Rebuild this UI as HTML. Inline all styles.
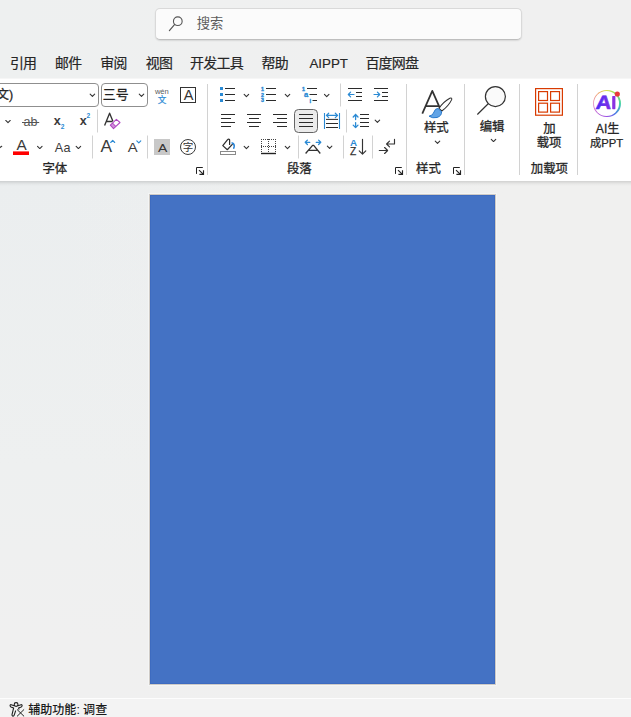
<!DOCTYPE html>
<html lang="zh-CN"><head><meta charset="utf-8"><title>Word</title>
<style>
html,body{margin:0;padding:0}
body{width:631px;height:717px;overflow:hidden;position:relative;background:linear-gradient(90deg,#eef0f0,#f0f0f0 70%);font-family:"Liberation Sans",sans-serif;}
div{position:absolute;box-sizing:border-box}
#search{left:155px;top:8px;width:367px;height:32px;background:#fbfbfb;border:1px solid #d9d9d9;border-bottom-color:#bebebe;border-radius:5px;box-shadow:0 1px 1.5px rgba(0,0,0,.10)}
#ribbon{left:0;top:78px;width:631px;height:103px;background:#fff;border-top:1px solid #f6f6f6}
#doc{left:0;top:181px;width:631px;height:517px;background:linear-gradient(90deg,rgba(240,240,239,0) 10%,rgba(240,240,239,1) 80%),linear-gradient(180deg,#ebeeef 0%,#eef0f0 55%,#f0f0f0 88%)}
#shadow{left:0;top:181px;width:631px;height:5px;background:linear-gradient(rgba(0,0,0,.13),rgba(0,0,0,.03) 60%,rgba(0,0,0,0))}
#page{left:150px;top:195px;width:345px;height:489px;background:#4472c4;border:1px solid #3d6bc0;box-shadow:0 0 0 1px #cfcbc6,0 0 0 2px #f4f5f5}
#status{left:0;top:698px;width:631px;height:19px;background:#f3f3f3;border-top:1px solid #fdfdfd}
.combo{top:83px;height:24px;border:1px solid #8f8f8f;border-radius:4px;background:#fff}
#justify{left:294px;top:109px;width:24px;height:24px;border:1px solid #656565;border-radius:4.5px;background:#ebebeb}
#airing{left:592.6px;top:89.8px;width:28px;height:27.4px;border-radius:50%;background:conic-gradient(from 0deg,#d4e44a 0deg,#8fe060 40deg,#48d6a8 90deg,#4a78e8 140deg,#9a4ee2 180deg,#b85ad6 225deg,#e89cc8 270deg,#f09a6c 315deg,#d4e44a 360deg)}
#airing i{position:absolute;left:1.35px;top:1.35px;right:1.35px;bottom:1.35px;border-radius:50%;background:#fff}
svg{position:absolute;left:0;top:0}
svg text{font-family:"Liberation Sans","Noto Sans CJK SC",sans-serif}
.sr{position:absolute;width:1px;height:1px;overflow:hidden;clip:rect(0 0 0 0);clip-path:inset(50%);white-space:nowrap;font-size:1px;color:transparent}
</style></head><body>
<div id="search"><span class="sr">搜索</span></div>
<div id="tabs" style="left:0;top:45px;width:631px;height:33px"><span class="sr">引用 邮件 审阅 视图 开发工具 帮助 AIPPT 百度网盘</span></div>
<div id="ribbon"><span class="sr">三号 字体 段落 样式 编辑 加载项 AI生成PPT</span></div>
<div id="doc"></div>
<div id="shadow"></div>
<div id="page"></div>
<div id="status"><span class="sr">辅助功能: 调查</span></div>
<div class="combo" style="left:-10px;width:109px"></div>
<div class="combo" style="left:101px;width:47px"></div>
<div id="justify"></div>
<div id="airing"><i></i></div>
<svg width="631" height="717" viewBox="0 0 631 717">
<circle cx="177.8" cy="21.2" r="4.35" fill="none" stroke="#555" stroke-width="1.1"/><path d="M174.7 24.4L169.4 30.6" stroke="#555" stroke-width="1.2" stroke-linecap="round"/>
<text x="196.68" y="28.26" font-size="13.33" fill="#5c5c5c">搜索</text>
<text x="9.97" y="68.29" font-size="13.92" fill="#262626" stroke="#262626" stroke-width="0.2" letter-spacing="-0.77">引用</text>
<text x="55.12" y="68.37" font-size="13.9" fill="#262626" stroke="#262626" stroke-width="0.2" letter-spacing="-0.76">邮件</text>
<text x="100.35" y="68.44" font-size="13.91" fill="#262626" stroke="#262626" stroke-width="0.2" letter-spacing="-0.77">审阅</text>
<text x="145.76" y="68.36" font-size="13.9" fill="#262626" stroke="#262626" stroke-width="0.2" letter-spacing="-0.76">视图</text>
<text x="190.07" y="68.42" font-size="14" fill="#262626" stroke="#262626" stroke-width="0.2" letter-spacing="-0.77">开发工具</text>
<text x="261.61" y="68.37" font-size="13.9" fill="#262626" stroke="#262626" stroke-width="0.2" letter-spacing="-0.76">帮助</text>
<text x="309.45" y="68.29" font-size="13.33" fill="#262626" stroke="#262626" stroke-width="0.16">AIPPT</text>
<text x="365.40" y="68.48" font-size="14" fill="#262626" stroke="#262626" stroke-width="0.2" letter-spacing="-0.77">百度网盘</text>
<text x="-3.48" y="98.97" font-size="12.5" fill="#262626" stroke="#262626" stroke-width="0.28">文)</text>
<path d="M90.15 94.17L92.40 96.42L94.65 94.17" fill="none" stroke="#333" stroke-width="1.1" stroke-linecap="round" stroke-linejoin="round"/>
<path d="M139.25 94.17L141.50 96.42L143.75 94.17" fill="none" stroke="#333" stroke-width="1.1" stroke-linecap="round" stroke-linejoin="round"/>
<text x="102.86" y="99.35" font-size="12.9" fill="#1f1f1f" stroke="#1f1f1f" stroke-width="0.28">三号</text>
<text x="154.89" y="93.86" font-size="7.6" fill="#5a5a5a">wén</text>
<text x="157.79" y="102.71" font-size="8.6" fill="#2a8ad4" stroke="#2a8ad4" stroke-width="0.17">文</text>
<rect x="180.5" y="87.5" width="15" height="15" fill="none" stroke="#333" stroke-width="1"/>
<text transform="translate(183.74 100) scale(1.042 1)" font-size="13.92" fill="#333">A</text>
<path d="M5.75 120.47L8.00 122.72L10.25 120.47" fill="none" stroke="#333" stroke-width="1.1" stroke-linecap="round" stroke-linejoin="round"/>
<text x="23.46" y="126.49" font-size="12.5" fill="#555">ab</text>
<path d="M22 122.5H39.2" stroke="#555" stroke-width="1"/>
<text x="53.80" y="124.93" font-size="12.6" font-weight="bold" fill="#3a3a3a">x</text>
<text x="60.77" y="129.29" font-size="6.6" font-weight="bold" fill="#2a8ad4">2</text>
<text x="79.80" y="124.93" font-size="12.6" font-weight="bold" fill="#3a3a3a">x</text>
<text x="86.57" y="118.09" font-size="6.6" font-weight="bold" fill="#2a8ad4">2</text>
<path d="M97.5 109.5V132.5" stroke="#d2d2d2" stroke-width="1" fill="none"/>
<path d="M104.6 125.6L109.6 113.2L112.9 121.2M106.3 121.5H112.6" fill="none" stroke="#333" stroke-width="1.35" stroke-linejoin="round"/>
<path d="M116.4 119.3L120 122.5L113.5 128.6L110.3 125.2ZM112.5 123L115.8 126.5" fill="#fff" stroke="#b146c2" stroke-width="1.05" stroke-linejoin="round"/><path d="M112.5 123L115.8 126.5L113.5 128.6L110.3 125.2Z" fill="#b146c2" opacity=".6"/>
<path d="M-1 148.3L1.7 146.3" stroke="#3a3a3a" stroke-width="1.2" fill="none" stroke-linecap="round"/>
<text transform="translate(16.54 149.80) scale(1.091 1)" font-size="14.05" fill="#3a3a3a">A</text>
<rect x="13" y="151.4" width="16" height="3.6" fill="#f00"/>
<path d="M37.55 146.28L39.80 148.53L42.05 146.28" fill="none" stroke="#333" stroke-width="1.1" stroke-linecap="round" stroke-linejoin="round"/>
<text x="54.75" y="151.84" font-size="12.6" fill="#3a3a3a" letter-spacing="0.4">Aa</text>
<path d="M76.15 146.28L78.40 148.53L80.65 146.28" fill="none" stroke="#333" stroke-width="1.1" stroke-linecap="round" stroke-linejoin="round"/>
<path d="M92.5 135.5V158.5" stroke="#d2d2d2" stroke-width="1" fill="none"/>
<text transform="translate(100.43 151.50) scale(1.076 1)" font-size="16.1" fill="#3a3a3a">A</text>
<path d="M110.7 142.5L112.7 140.4L114.7 142.5" fill="none" stroke="#2a8ad4" stroke-width="1.1" stroke-linecap="round" stroke-linejoin="round"/>
<text transform="translate(127.64 151.50) scale(1.222 1)" font-size="12.14" fill="#3a3a3a">A</text>
<path d="M136.8 140.8L138.8 142.9L140.8 140.8" fill="none" stroke="#2a8ad4" stroke-width="1.1" stroke-linecap="round" stroke-linejoin="round"/>
<path d="M147.5 135.5V158.5" stroke="#d2d2d2" stroke-width="1" fill="none"/>
<rect x="154" y="139" width="16" height="16" fill="#c8c8c8"/>
<text transform="translate(158.04 151.50) scale(1.222 1)" font-size="11.46" fill="#333">A</text>
<circle cx="188" cy="147" r="7.5" fill="none" stroke="#3a3a3a" stroke-width="1"/>
<text x="182.71" y="151.17" font-size="10.6" fill="#333">字</text>
<text x="42.44" y="173.16" font-size="12.4" fill="#262626" stroke="#262626" stroke-width="0.27">字体</text>
<path d="M202.8 167.5H196.5V173.9" fill="none" stroke="#222" stroke-width="1"/><path d="M199 170.2L203.2 174.2M199.4 174.4H203.5V170.2" fill="none" stroke="#222" stroke-width="1.15"/>
<path d="M207.5 84V175" stroke="#d2d2d2" stroke-width="1" fill="none"/>
<rect x="220" y="87.0" width="3" height="3" fill="#2a8ad4"/>
<rect x="220" y="93.0" width="3" height="3" fill="#2a8ad4"/>
<rect x="220" y="99.0" width="3" height="3" fill="#2a8ad4"/>
<path d="M225 88.5H235M225 94.5H235M225 100.5H235" stroke="#2b2b2b" stroke-width="1" fill="none"/>
<path d="M244.15 94.38L246.40 96.62L248.65 94.38" fill="none" stroke="#333" stroke-width="1.1" stroke-linecap="round" stroke-linejoin="round"/>
<text x="260.89" y="90.56" font-size="5.3" font-weight="bold" fill="#2a8ad4" stroke="#2a8ad4" stroke-width="0.37">1</text>
<text x="260.98" y="96.50" font-size="5.3" font-weight="bold" fill="#2a8ad4" stroke="#2a8ad4" stroke-width="0.37">2</text>
<text x="261.02" y="102.46" font-size="5.3" font-weight="bold" fill="#2a8ad4" stroke="#2a8ad4" stroke-width="0.37">3</text>
<path d="M266 88.5H276M266 94.5H276M266 100.5H276" stroke="#2b2b2b" stroke-width="1" fill="none"/>
<path d="M285.25 94.38L287.50 96.62L289.75 94.38" fill="none" stroke="#333" stroke-width="1.1" stroke-linecap="round" stroke-linejoin="round"/>
<text x="301.89" y="90.56" font-size="5.3" font-weight="bold" fill="#2a8ad4" stroke="#2a8ad4" stroke-width="0.37">1</text>
<text x="304.03" y="96.83" font-size="7.6" font-weight="bold" fill="#2a8ad4" stroke="#2a8ad4" stroke-width="0.3">a</text>
<text x="309.54" y="102.77" font-size="5.6" font-weight="bold" fill="#2a8ad4" stroke="#2a8ad4" stroke-width="0.34">i</text>
<path d="M307 88.5H317M309.5 94.5H317M312.5 100.5H317" stroke="#2b2b2b" stroke-width="1" fill="none"/>
<path d="M324.45 94.38L326.70 96.62L328.95 94.38" fill="none" stroke="#333" stroke-width="1.1" stroke-linecap="round" stroke-linejoin="round"/>
<path d="M340.5 83.5V106.5" stroke="#d2d2d2" stroke-width="1" fill="none"/>
<path d="M348 88.5H362M356 92.5H362M356 96.5H362M348 100.5H362" stroke="#2b2b2b" stroke-width="1" fill="none"/>
<path d="M348.3 94.5H354M350.6 92.2L348.3 94.5L350.6 96.8" fill="none" stroke="#2a8ad4" stroke-width="1.2" stroke-linecap="round" stroke-linejoin="round"/>
<path d="M374 88.5H388M382 92.5H388M382 96.5H388M374 100.5H388" stroke="#2b2b2b" stroke-width="1" fill="none"/>
<path d="M374 94.5H379.7M377.4 92.2L379.7 94.5L377.4 96.8" fill="none" stroke="#2a8ad4" stroke-width="1.2" stroke-linecap="round" stroke-linejoin="round"/>
<path d="M221 114.5H235M221 118.5H231M221 122.5H235M221 126.5H231" stroke="#2b2b2b" stroke-width="1" fill="none"/>
<path d="M247 114.5H261M249 118.5H259M247 122.5H261M249 126.5H259" stroke="#2b2b2b" stroke-width="1" fill="none"/>
<path d="M273 114.5H287M277 118.5H287M273 122.5H287M277 126.5H287" stroke="#2b2b2b" stroke-width="1" fill="none"/>
<path d="M299 114.5H313M299 118.5H313M299 122.5H313M299 126.5H313" stroke="#2b2b2b" stroke-width="1" fill="none"/>
<path d="M324.5 113V129M339.5 113V129" stroke="#2a8ad4" stroke-width="1.1" fill="none"/>
<path d="M326.4 115.4H337.6M328.7 113.2L326.4 115.4L328.7 117.6M335.3 113.2L337.6 115.4L335.3 117.6" stroke="#2a8ad4" stroke-width="1.2" fill="none" stroke-linecap="round" stroke-linejoin="round"/>
<path d="M326 119.4H338M326 123.5H338M326 127.5H338" stroke="#2b2b2b" stroke-width="1" fill="none"/>
<path d="M346.5 109.5V132.5" stroke="#d2d2d2" stroke-width="1" fill="none"/>
<path d="M355.6 114.5V119.6M355.6 122.6V127.6M353.2 117L355.6 114.5L358 117M353.2 125.1L355.6 127.6L358 125.1" stroke="#2a8ad4" stroke-width="1.3" fill="none" stroke-linecap="round" stroke-linejoin="round"/>
<path d="M360 114.5H369M360 118.5H369M360 122.5H369M360 126.5H369" stroke="#2b2b2b" stroke-width="1" fill="none"/>
<path d="M375.15 120.17L377.40 122.42L379.65 120.17" fill="none" stroke="#333" stroke-width="1.1" stroke-linecap="round" stroke-linejoin="round"/>
<path d="M232.3 144.4L227.3 149.7L222.8 145.6L227.4 139.8Q228.5 138.6 229.5 139.5Q229.7 139.8 229.6 140.6V144.4" fill="none" stroke="#2e2e2e" stroke-width="1.25" stroke-linejoin="round" stroke-linecap="round"/>
<path d="M232 142.9Q234.5 143.6 234.2 146.2L233.8 148.2" fill="none" stroke="#1e7fd6" stroke-width="1.5" stroke-linecap="round"/>
<rect x="220.5" y="151.5" width="15" height="3" fill="#fff" stroke="#8a8a8a" stroke-width="1"/>
<path d="M244.15 146.38L246.40 148.62L248.65 146.38" fill="none" stroke="#333" stroke-width="1.1" stroke-linecap="round" stroke-linejoin="round"/>
<path d="M261 139.5H276M261 146.5H276M261.5 139V153M268.5 139V153M275.5 139V153" stroke="#444" stroke-width="1" stroke-dasharray="1 1" fill="none"/>
<path d="M261 153.5H276" stroke="#222" stroke-width="1.4" fill="none"/>
<path d="M285.25 146.38L287.50 148.62L289.75 146.38" fill="none" stroke="#333" stroke-width="1.1" stroke-linecap="round" stroke-linejoin="round"/>
<path d="M298.5 135.5V158.5" stroke="#d2d2d2" stroke-width="1" fill="none"/>
<path d="M305.2 142.3H309.8M307.4 140.1L305.2 142.3L307.4 144.5M316.2 142.3H320.8M318.6 140.1L320.8 142.3L318.6 144.5" stroke="#2a8ad4" stroke-width="1.25" fill="none" stroke-linecap="round" stroke-linejoin="round"/>
<path d="M305.6 153.5L312.6 145.3H313.7L320.3 153.5M308.4 150.3H317.6" fill="none" stroke="#333" stroke-width="1.3" stroke-linejoin="round"/>
<path d="M327.35 146.18L329.60 148.43L331.85 146.18" fill="none" stroke="#333" stroke-width="1.1" stroke-linecap="round" stroke-linejoin="round"/>
<path d="M343.5 135.5V158.5" stroke="#d2d2d2" stroke-width="1" fill="none"/>
<text x="349.96" y="145.98" font-size="9.83" font-weight="bold" fill="#2a8ad4">A</text>
<text x="349.98" y="154.87" font-size="10.22" fill="#333" stroke="#333" stroke-width="0.25">Z</text>
<path d="M362.5 139.3V154M359.2 150.9L362.5 154.2L365.8 150.9" fill="none" stroke="#333" stroke-width="1.15" stroke-linecap="round" stroke-linejoin="round"/>
<path d="M372.5 135.5V158.5" stroke="#d2d2d2" stroke-width="1" fill="none"/>
<path d="M379.3 150.5H387.4M384.6 147.5L387.6 150.5L384.6 153.5" fill="none" stroke="#333" stroke-width="1.15" stroke-linecap="round" stroke-linejoin="round"/>
<path d="M394.5 139.4V144H386.7M389.5 141.1L386.6 144L389.5 146.9" fill="none" stroke="#333" stroke-width="1.15" stroke-linecap="round" stroke-linejoin="round"/>
<text x="286.99" y="173.12" font-size="12.4" fill="#262626" stroke="#262626" stroke-width="0.27">段落</text>
<path d="M401.8 167.5H395.5V173.9" fill="none" stroke="#222" stroke-width="1"/><path d="M398 170.2L402.2 174.2M398.4 174.4H402.5V170.2" fill="none" stroke="#222" stroke-width="1.15"/>
<path d="M406.5 84V175" stroke="#d2d2d2" stroke-width="1" fill="none"/>
<path d="M422.3 113.6L432.3 90.8L439.8 107.8M425.4 106.2H438.8" fill="none" stroke="#333" stroke-width="1.75" stroke-linejoin="round"/>
<path d="M439 108.4Q443.4 101.8 449.8 98.3Q452.2 97.4 451.7 99.6Q448.8 105.8 441.8 111Z" fill="#fff" stroke="#333" stroke-width="1.05" stroke-linejoin="round"/>
<path d="M438 108.5L441.6 111.6Q441.8 116 437 117.5Q432.6 118.6 429 116.2Q433 115.6 434 112Q435 108.4 438 108.5Z" fill="#62a4e6" stroke="#2a7acc" stroke-width="1" stroke-linejoin="round"/>
<text x="423.92" y="132.12" font-size="12.4" fill="#262626" stroke="#262626" stroke-width="0.27">样式</text>
<path d="M435.25 141.18L437.50 143.43L439.75 141.18" fill="none" stroke="#333" stroke-width="1.1" stroke-linecap="round" stroke-linejoin="round"/>
<text x="416.02" y="173.12" font-size="12.4" fill="#262626" stroke="#262626" stroke-width="0.27">样式</text>
<path d="M459.8 167.5H453.5V173.9" fill="none" stroke="#222" stroke-width="1"/><path d="M456 170.2L460.2 174.2M456.4 174.4H460.5V170.2" fill="none" stroke="#222" stroke-width="1.15"/>
<path d="M464.5 84V175" stroke="#d2d2d2" stroke-width="1" fill="none"/>
<circle cx="495.4" cy="96.6" r="10" fill="#fafafa" stroke="#333" stroke-width="1.2"/><path d="M488.2 103.8L477.6 114.2" stroke="#333" stroke-width="1.2" stroke-linecap="round"/>
<text x="479.63" y="130.55" font-size="12.4" fill="#262626" stroke="#262626" stroke-width="0.27">编辑</text>
<path d="M491.25 139.28L493.50 141.53L495.75 139.28" fill="none" stroke="#333" stroke-width="1.1" stroke-linecap="round" stroke-linejoin="round"/>
<path d="M519.5 84V175" stroke="#d2d2d2" stroke-width="1" fill="none"/>
<rect x="535.6" y="88.6" width="26.8" height="26.6" fill="none" stroke="#d83b01" stroke-width="1.2"/>
<rect x="538.6" y="91.6" width="8.9" height="8.9" fill="none" stroke="#d83b01" stroke-width="1.2"/>
<rect x="538.6" y="103.2" width="8.9" height="8.9" fill="none" stroke="#d83b01" stroke-width="1.2"/>
<rect x="550.6" y="91.6" width="8.9" height="8.9" fill="none" stroke="#d83b01" stroke-width="1.2"/>
<rect x="550.6" y="103.2" width="8.9" height="8.9" fill="none" stroke="#d83b01" stroke-width="1.2"/>
<text x="543.17" y="132.73" font-size="12.4" fill="#262626" stroke="#262626" stroke-width="0.27">加</text>
<text x="536.73" y="147.01" font-size="12.4" fill="#262626" stroke="#262626" stroke-width="0.27">载项</text>
<text x="530.75" y="173.11" font-size="12.4" fill="#262626" stroke="#262626" stroke-width="0.27">加载项</text>
<path d="M577.5 84V175" stroke="#d2d2d2" stroke-width="1" fill="none"/>
<defs><linearGradient id="aig" x1="0" x2="1" y1="0" y2="0"><stop offset="0" stop-color="#4a2cf5"/><stop offset="1" stop-color="#8230e4"/></linearGradient></defs>
<g transform="translate(603.6 102.6) skewX(-5) translate(-603.6 -102.6)"><text transform="translate(595.76 109.20) scale(1.134 1)" font-size="19.19" font-weight="bold" fill="url(#aig)" stroke="url(#aig)" stroke-width="0.55" stroke-linejoin="round">A</text></g>
<rect x="612.2" y="96" width="3.2" height="13.2" rx="0.6" fill="#8a30e2"/>
<circle cx="617.3" cy="94" r="2.6" fill="#e8393c"/>
<text x="595.85" y="133.01" font-size="12.13" fill="#262626" stroke="#262626" stroke-width="0.27">AI生</text>
<text x="589.99" y="146.65" font-size="11.29" fill="#262626" stroke="#262626" stroke-width="0.25">成PPT</text>
<g transform="translate(0 0.5)" fill="none" stroke="#1f1f1f" stroke-width="1.1" stroke-linejoin="round" stroke-linecap="round"><circle cx="16.1" cy="704" r="1.9"/><path d="M14.2 705.2L11.2 704.2Q10 704 10.1 705.2Q10.2 706 11 706.4L13.6 707.6L12 714.2Q11.8 715.4 12.8 715.6Q13.8 715.8 14.2 714.6L15.6 710.4"/><path d="M18 705.2L21 704.2Q22.2 704 22.1 705.2Q22 706 21.2 706.4L18.6 707.6L18.9 708.6"/><path d="M17.3 709.2L23.8 715.6M23.8 709.2L17.3 715.6" stroke-width="1"/></g>
<text x="28.13" y="714.00" font-size="12.07" font-weight="500" fill="#1a1a1a">辅助功能: 调查</text>
</svg>
</body></html>
